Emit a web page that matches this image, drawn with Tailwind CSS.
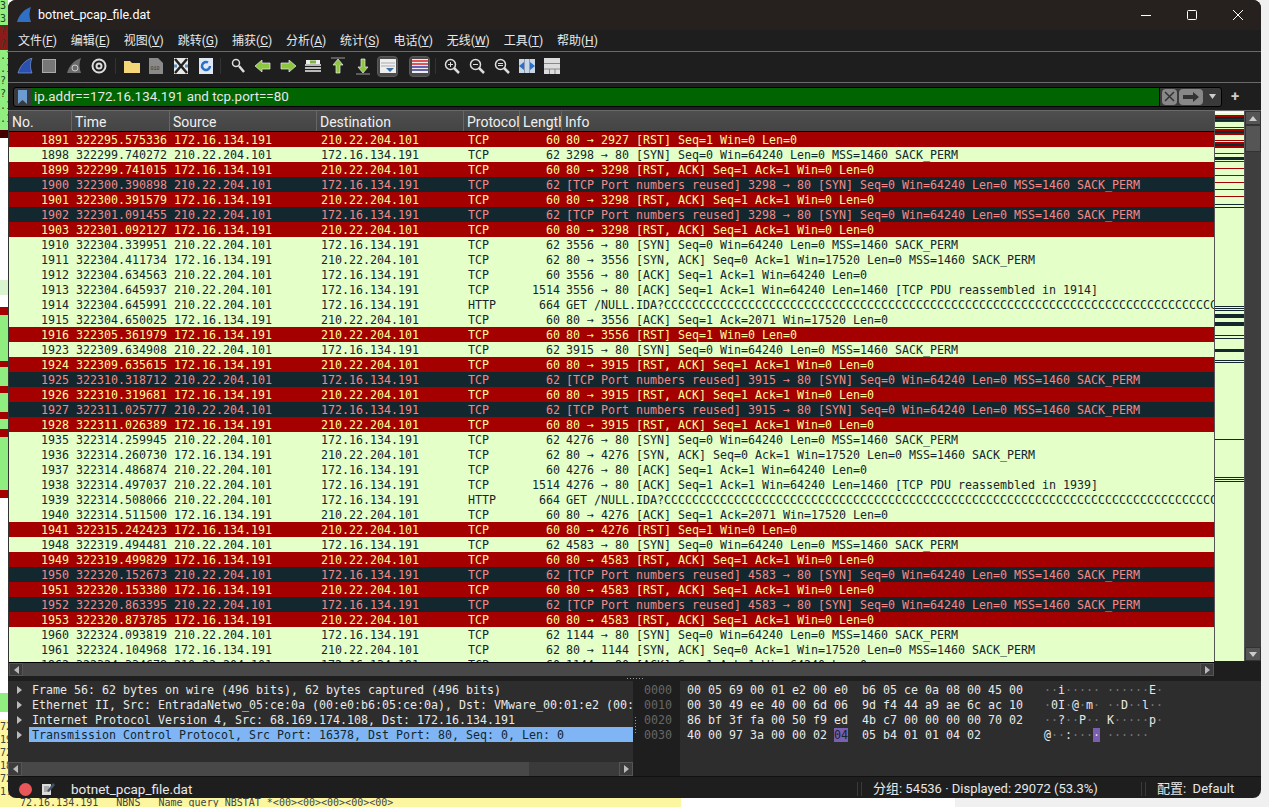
<!DOCTYPE html>
<html lang="zh">
<head>
    <meta charset="UTF-8">
    <title>botnet_pcap_file.dat</title>
    <script src="https://cdn.jsdelivr.net/npm/@tailwindcss/browser@4"></script>
</head>
<body class="relative w-[1269px] h-[807px] overflow-hidden bg-[#f0f0f0] font-['Roboto','Noto_Sans_CJK_SC',sans-serif]">
    <!-- desktop behind the window -->
    <div class="absolute left-0 top-0 w-[955px] h-[807px] bg-white"></div>
    <div class="absolute left-0 top-0 w-[8px] h-[130px] bg-[#90ee80] overflow-hidden font-['DejaVu_Sans_Mono',monospace] text-[10px] leading-[12.5px] text-[#224422]">
        <div>3.</div><div>3.</div><div class="bg-[#8b1a1a]">?.</div><div class="bg-[#8b1a1a]">?.</div><div>.1</div><div>.1</div><div>?.</div><div>?.</div><div>.1</div><div>.1</div>
    </div>
    <div class="absolute left-0 top-[130px] w-[8px] h-[8px] bg-[#400]"></div>
    <div class="absolute left-0 top-[280px] w-[8px] h-[15px] bg-[#d8f5d0]"></div>
    <div class="absolute left-0 top-[307px] w-[8px] h-[191px] bg-[#90ee80] flex flex-col">
        <div class="h-[8px] bg-[#a40000]"></div>
        <div class="h-[48px]"></div>
        <div class="h-[6px] bg-[#a40000]"></div>
        <div class="h-[19px]"></div>
        <div class="h-[8px] bg-[#a40000]"></div>
        <div class="h-[19px]"></div>
        <div class="h-[8px] bg-[#a40000]"></div>
        <div class="h-[10px]"></div>
        <div class="h-[8px] bg-[#a40000]"></div>
        <div class="h-[55px]"></div>
        <div class="h-[8px] bg-[#a40000]"></div>
    </div>
    <div class="absolute left-0 top-[693px] w-[8px] h-[19px] bg-[#90ee80]"></div>
    <div class="absolute left-0 top-[720px] w-[681px] h-[87px] bg-[#fdf6a0] overflow-hidden font-['DejaVu_Sans_Mono',monospace] text-[10px] leading-[13px] text-[#444]">
        <div>72</div><div>19</div><div>72</div><div>18</div><div>72</div><div>1.</div>
        <div class="pl-[20px] leading-[10px] whitespace-nowrap">72.16.134.191 &nbsp;&nbsp;NBNS &nbsp;&nbsp;Name query NBSTAT *&lt;00&gt;&lt;00&gt;&lt;00&gt;&lt;00&gt;&lt;00&gt;</div>
    </div>

    <!-- window -->
    <div class="absolute left-[8px] top-0 w-[1253px] h-[798px] rounded-lg overflow-hidden bg-[#1e1e1e] flex flex-col text-[#e8e8e8]">
        <!-- title bar -->
        <div class="h-[30px] shrink-0 bg-[#26211f] flex items-center pl-[8px]">
            <svg width="16" height="16" viewBox="0 0 16 16"><path d="M1 15 C3 8 8 2 15 0 C13 5 13 10 15 15 Z" fill="#2f6fc4"/></svg>
            <span class="ml-[6px] text-[12.5px] text-white">botnet_pcap_file.dat</span>
            <div class="ml-auto flex items-center">
                <div class="w-[46px] flex justify-center"><svg width="10" height="10" viewBox="0 0 10 10"><path d="M0 5.5H10" stroke="#fff"/></svg></div>
                <div class="w-[46px] flex justify-center"><svg width="10" height="10" viewBox="0 0 10 10"><rect x=".5" y=".5" width="9" height="9" rx="1" fill="none" stroke="#fff"/></svg></div>
                <div class="w-[46px] flex justify-center"><svg width="10" height="10" viewBox="0 0 10 10"><path d="M0 0L10 10M10 0L0 10" stroke="#fff"/></svg></div>
            </div>
        </div>
        <!-- menu -->
        <div class="h-[22px] shrink-0 flex items-center gap-[13.9px] pl-[10px] text-[12px] border-b border-[#6a6a6a]">
            <span>文件(<u>F</u>)</span><span>编辑(<u>E</u>)</span><span>视图(<u>V</u>)</span><span>跳转(<u>G</u>)</span><span>捕获(<u>C</u>)</span><span>分析(<u>A</u>)</span><span>统计(<u>S</u>)</span><span>电话(<u>Y</u>)</span><span>无线(<u>W</u>)</span><span>工具(<u>T</u>)</span><span>帮助(<u>H</u>)</span>
        </div>
        <!-- toolbar -->
        <div class="h-[31px] shrink-0 flex items-center pl-[9px] pb-[2px] border-b border-[#6a6a6a]">
            <div class="w-[16px] h-[16px]"><svg viewBox="0 0 16 16"><path d="M1 15 C3 8 8 2 15 0 C13 5 13 10 15 15 Z" fill="#2a50b0" stroke="#8fa8d8" stroke-width=".6"/></svg></div>
            <div class="ml-[9px] w-[14px] h-[14px] bg-[#777] border border-[#aaa]"></div>
            <div class="ml-[10px] w-[16px] h-[16px]"><svg viewBox="0 0 16 16"><path d="M1 15 C3 8 8 2 15 0 C13 5 13 10 15 15 Z" fill="#6b6b6b"/><circle cx="9" cy="10" r="3" fill="none" stroke="#ccc"/></svg></div>
            <div class="ml-[9px] w-[16px] h-[16px]"><svg viewBox="0 0 16 16"><circle cx="8" cy="8" r="6.5" fill="none" stroke="#ddd" stroke-width="2"/><circle cx="8" cy="8" r="2.5" fill="none" stroke="#ddd" stroke-width="2"/></svg></div>
            <div class="ml-[8px] mr-[8px] w-px h-[16px] bg-[#333]"></div>
            <div class="w-[16px] h-[14px]"><svg viewBox="0 0 16 14"><path d="M0 2H6L8 4H16V14H0Z" fill="#f5d77a"/></svg></div>
            <div class="ml-[9px] w-[14px] h-[16px]"><svg viewBox="0 0 14 16"><path d="M0 0H9L14 5V16H0Z" fill="#8a8a8a"/><text x="1.5" y="12" font-size="5" fill="#333" font-family="Liberation Mono">010</text></svg></div>
            <div class="ml-[11px] w-[14px] h-[16px]"><svg viewBox="0 0 14 16"><rect width="14" height="16" fill="#e8e8e8"/><path d="M1 1L13 15M13 1L1 15" stroke="#222" stroke-width="2.5"/><path d="M0 8H3M11 8H14" stroke="#5f8fb8" stroke-width="3"/></svg></div>
            <div class="ml-[11px] w-[14px] h-[16px]"><svg viewBox="0 0 14 16"><rect width="14" height="16" fill="#dfe8f5"/><path d="M11 8A4 4 0 1 1 9 4.5" fill="none" stroke="#2a70c8" stroke-width="2.5"/></svg></div>
            <div class="ml-[7px] mr-[8px] w-px h-[16px] bg-[#333]"></div>
            <div class="ml-[2px] w-[14px] h-[16px]"><svg viewBox="0 0 14 16"><circle cx="5" cy="5" r="3.5" fill="none" stroke="#ddd" stroke-width="1.5"/><path d="M8 8L13 14" stroke="#ddd" stroke-width="2.5"/></svg></div>
            <div class="ml-[10px] w-[16px] h-[12px]"><svg viewBox="0 0 16 12"><path d="M0 6L7 0V3H15V9H7V12Z" fill="#8dc63f" stroke="#eee" stroke-width=".7"/></svg></div>
            <div class="ml-[9px] w-[16px] h-[12px]"><svg viewBox="0 0 16 12"><path d="M16 6L9 0V3H1V9H9V12Z" fill="#8dc63f" stroke="#eee" stroke-width=".7"/></svg></div>
            <div class="ml-[9px] w-[16px] h-[16px]"><svg viewBox="0 0 16 16"><path d="M0 7H16M0 10H16M0 13H16" stroke="#eee" stroke-width="1.5"/><rect x="1" y="2" width="14" height="4" fill="#eee"/><path d="M5 4H11" stroke="#7cb342" stroke-width="3"/></svg></div>
            <div class="ml-[9px] w-[16px] h-[18px]"><svg viewBox="0 0 16 18"><path d="M1 1H15" stroke="#999"/><path d="M8 2L13 8H10V16H6V8H3Z" fill="#8dc63f" stroke="#eee" stroke-width=".7"/></svg></div>
            <div class="ml-[9px] w-[16px] h-[18px]"><svg viewBox="0 0 16 18"><path d="M1 17H15" stroke="#999"/><path d="M8 16L13 10H10V2H6V10H3Z" fill="#8dc63f" stroke="#eee" stroke-width=".7"/></svg></div>
            <div class="ml-[6px] w-[21px] h-[21px] rounded bg-[#4a4a4a] border border-[#5a5a5a] flex items-center justify-center"><svg width="16" height="14" viewBox="0 0 16 14"><rect width="16" height="14" fill="#eee"/><path d="M1 4H15M1 7H15" stroke="#aaa"/><path d="M6 9H14L10 13Z" fill="#3a6ea5"/></svg></div>
            <div class="ml-[11px] w-[21px] h-[21px] rounded bg-[#4a4a4a] border border-[#5a5a5a] flex items-center justify-center"><svg width="16" height="14" viewBox="0 0 16 14"><rect width="16" height="14" fill="#eee"/><path d="M0 2H16" stroke="#d22" stroke-width="1.5"/><path d="M0 5H16" stroke="#d22" stroke-width="1.5"/><path d="M0 8H16" stroke="#33a" stroke-width="1.5"/><path d="M0 11H16" stroke="#338" stroke-width="1.5"/></svg></div>
            <div class="ml-[5px] mr-[8px] w-px h-[16px] bg-[#333]"></div>
            <div class="w-[16px] h-[16px]"><svg viewBox="0 0 16 16"><circle cx="6.5" cy="6.5" r="5" fill="none" stroke="#ddd" stroke-width="1.5"/><path d="M10 10L15 15" stroke="#ddd" stroke-width="2.5"/><path d="M4 6.5H9M6.5 4V9" stroke="#ddd"/></svg></div>
            <div class="ml-[9px] w-[16px] h-[16px]"><svg viewBox="0 0 16 16"><circle cx="6.5" cy="6.5" r="5" fill="none" stroke="#ddd" stroke-width="1.5"/><path d="M10 10L15 15" stroke="#ddd" stroke-width="2.5"/><path d="M4 6.5H9" stroke="#ddd"/></svg></div>
            <div class="ml-[9px] w-[16px] h-[16px]"><svg viewBox="0 0 16 16"><circle cx="6.5" cy="6.5" r="5" fill="none" stroke="#ddd" stroke-width="1.5"/><path d="M10 10L15 15" stroke="#ddd" stroke-width="2.5"/><path d="M4 5.5H9M4 7.5H9" stroke="#ddd"/></svg></div>
            <div class="ml-[9px] w-[16px] h-[14px]"><svg viewBox="0 0 16 14"><rect width="16" height="14" fill="#c9d6e6"/><path d="M5.5 0V14M10.5 0V14" stroke="#8a9ab0"/><path d="M0 7L5 3V11ZM16 7L11 3V11Z" fill="#2a70c8"/></svg></div>
            <div class="ml-[9px] w-[16px] h-[16px]"><svg viewBox="0 0 16 16"><rect width="16" height="16" fill="#ddd"/><path d="M0 5.5H16M0 11H16M5.5 11V16M11 11V16" stroke="#888"/></svg></div>
        </div>
        <!-- display filter -->
        <div class="h-[28px] shrink-0 flex items-center pl-[5px] border-b border-[#6a6a6a]">
            <div class="w-[1209px] h-[20px] flex items-stretch rounded-[3px] bg-[#3a3a3a] border border-black">
                <div class="w-[17px] flex items-center justify-center"><svg width="9" height="14" viewBox="0 0 9 14"><path d="M0 0H9V14L4.5 10L0 14Z" fill="#6c9bd2"/></svg></div>
                <div class="w-[1129px] bg-[#006400] text-[13.4px] leading-[18px] pl-[3px] text-[#e8e8e8] border-r border-black">ip.addr==172.16.134.191 and tcp.port==80</div>
                <div class="ml-[2px] my-[1px] w-[15px] bg-[#888] rounded-sm flex items-center justify-center"><svg width="11" height="11" viewBox="0 0 11 11"><path d="M1 1L10 10M10 1L1 10" stroke="#333" stroke-width="1.5"/></svg></div>
                <div class="ml-[2px] my-[1px] w-[24px] bg-[#888] rounded-sm flex items-center justify-center"><svg width="16" height="10" viewBox="0 0 16 10"><path d="M0 3H10V0L16 5L10 10V7H0Z" fill="#333"/></svg></div>
                <div class="flex-1 flex items-center justify-center"><svg width="7" height="5" viewBox="0 0 7 5"><path d="M0 0H7L3.5 5Z" fill="#ccc"/></svg></div>
            </div>
            <span class="ml-[9px] text-[15px] font-bold text-[#ccc]">+</span>
        </div>
        <!-- packet list -->
        <div class="h-[565px] shrink-0 flex">
            <div class="w-[1206px] shrink-0 flex flex-col border-l border-[#333]">
                <div class="h-[21px] shrink-0 flex text-[14px] text-[#f0f0f0] bg-gradient-to-b from-[#4e4e4e] to-[#444] border-b border-black leading-[22px]">
                    <div class="w-[63px] pl-[3px] border-r border-[#666]">No.</div>
                    <div class="w-[98px] pl-[3px] border-r border-[#666]">Time</div>
                    <div class="w-[147px] pl-[3px] border-r border-[#666]">Source</div>
                    <div class="w-[147px] pl-[3px] border-r border-[#666]">Destination</div>
                    <div class="w-[56px] pl-[3px] border-r border-[#666] overflow-hidden whitespace-nowrap">Protocol</div>
                    <div class="w-[42px] pl-[3px] border-r border-[#666] overflow-hidden whitespace-nowrap">Length</div>
                    <div class="flex-1 pl-[3px]">Info</div>
                </div>
                <div id="packets" class="h-[530px] overflow-hidden font-['DejaVu_Sans_Mono',monospace] text-[11.63px] bg-[#e4ffc7]"></div>
                <div class="h-[14px] shrink-0 flex bg-[#484848] border-t border-black">
                    <div class="w-[14px] bg-[#3c3c3c] border border-[#555] flex items-center justify-center"><svg width="5" height="8" viewBox="0 0 5 8"><path d="M5 0V8L0 4Z" fill="#bbb"/></svg></div>
                    <div class="flex-1"></div>
                    <div class="w-[14px] bg-[#3c3c3c] border border-[#555] flex items-center justify-center"><svg width="5" height="8" viewBox="0 0 5 8"><path d="M0 0V8L5 4Z" fill="#bbb"/></svg></div>
                </div>
            </div>
            <!-- packet map + scrollbar -->
            <div class="w-[47px] shrink-0 flex h-[550px]">
                <div id="packetMap" class="relative w-[31px] h-[550px] overflow-hidden bg-[#e4ffc7] border-x border-[#555]"></div>
                <div class="w-[16px] flex flex-col bg-[#3e3e3e]">
                    <div class="h-[14px] bg-[#555] border border-[#333] flex items-center justify-center"><svg width="8" height="5" viewBox="0 0 8 5"><path d="M0 5H8L4 0Z" fill="#ccc"/></svg></div>
                    <div class="h-[27px] bg-[#555] border border-[#333]"></div>
                    <div class="flex-1"></div>
                    <div class="h-[14px] bg-[#555] border border-[#333] flex items-center justify-center"><svg width="8" height="5" viewBox="0 0 8 5"><path d="M0 0H8L4 5Z" fill="#ccc"/></svg></div>
                </div>
            </div>
        </div>
        <!-- splitter -->
        <div class="h-[5px] shrink-0 flex items-center justify-center gap-[2px]">
            <i class="w-px h-px bg-[#999]"></i><i class="w-px h-px bg-[#999]"></i><i class="w-px h-px bg-[#999]"></i><i class="w-px h-px bg-[#999]"></i><i class="w-px h-px bg-[#999]"></i><i class="w-px h-px bg-[#999]"></i>
        </div>
        <!-- detail and bytes -->
        <div class="h-[95px] shrink-0 flex font-['DejaVu_Sans_Mono',monospace] text-[11.63px] leading-[15px]">
            <div class="w-[625px] shrink-0 flex flex-col bg-[#2d2d2d]">
                <div class="flex-1 pt-[1px] overflow-hidden whitespace-nowrap leading-[17px]">
                    <div class="flex h-[15px]"><div class="w-[21px] shrink-0 pl-[9px] flex items-center"><svg width="5" height="8" viewBox="0 0 5 8"><path d="M0 0V8L5 4Z" fill="#bbb"/></svg></div><div class="pl-[3px]">Frame 56: 62 bytes on wire (496 bits), 62 bytes captured (496 bits)</div></div>
                    <div class="flex h-[15px]"><div class="w-[21px] shrink-0 pl-[9px] flex items-center"><svg width="5" height="8" viewBox="0 0 5 8"><path d="M0 0V8L5 4Z" fill="#bbb"/></svg></div><div class="pl-[3px]">Ethernet II, Src: EntradaNetwo_05:ce:0a (00:e0:b6:05:ce:0a), Dst: VMware_00:01:e2 (00:</div></div>
                    <div class="flex h-[15px]"><div class="w-[21px] shrink-0 pl-[9px] flex items-center"><svg width="5" height="8" viewBox="0 0 5 8"><path d="M0 0V8L5 4Z" fill="#bbb"/></svg></div><div class="pl-[3px]">Internet Protocol Version 4, Src: 68.169.174.108, Dst: 172.16.134.191</div></div>
                    <div class="flex h-[15px]"><div class="w-[21px] shrink-0 pl-[9px] flex items-center"><svg width="5" height="8" viewBox="0 0 5 8"><path d="M0 0V8L5 4Z" fill="#bbb"/></svg></div><div class="flex-1 pl-[3px] bg-[#7fb5f5] text-[#12272e]">Transmission Control Protocol, Src Port: 16378, Dst Port: 80, Seq: 0, Len: 0</div></div>
                </div>
                <div class="h-[14px] shrink-0 flex bg-[#484848]">
                    <div class="w-[14px] bg-[#3c3c3c] border border-[#555] flex items-center justify-center"><svg width="5" height="8" viewBox="0 0 5 8"><path d="M5 0V8L0 4Z" fill="#bbb"/></svg></div>
                    <div class="flex-1"></div>
                    <div class="w-[90px] bg-[#3a3a3a]"></div>
                    <div class="w-[14px] bg-[#3c3c3c] border border-[#555] flex items-center justify-center"><svg width="5" height="8" viewBox="0 0 5 8"><path d="M0 0V8L5 4Z" fill="#bbb"/></svg></div>
                </div>
            </div>
            <div class="w-[4px] shrink-0 flex flex-col items-center justify-center gap-[2px] pb-[8px]">
                <i class="w-px h-px bg-[#999]"></i><i class="w-px h-px bg-[#999]"></i><i class="w-px h-px bg-[#999]"></i><i class="w-px h-px bg-[#999]"></i><i class="w-px h-px bg-[#999]"></i><i class="w-px h-px bg-[#999]"></i>
            </div>
            <div class="flex-1 flex bg-[#2d2d2d]">
                <div class="w-[43px] shrink-0 bg-[#1e1e1e] pt-[2px] pl-[7px] text-[#666]">
                    <div>0000</div><div>0010</div><div>0020</div><div>0030</div>
                </div>
                <div id="hexDump" class="pt-[2px] pl-[7px] whitespace-pre"></div>
            </div>
        </div>
        <!-- status bar -->
        <div class="flex-1 flex items-center pl-[11px] pt-[2px] text-[13px] border-t border-[#111]">
            <div class="w-[13px] h-[13px] rounded-full bg-[#e8585a]"></div>
            <div class="ml-[9px] w-[14px] h-[14px]"><svg viewBox="0 0 14 14"><path d="M1 2H10V13H1Z" fill="#ddd"/><path d="M3 5H8M3 7H8M3 9H8" stroke="#777"/><path d="M6 9L12 1L14 3L8 10Z" fill="#456"/></svg></div>
            <span class="ml-[16px] w-[786px] text-[13.5px]">botnet_pcap_file.dat</span>
            <div class="w-px h-[14px] bg-[#3a3a3a]"></div>
            <div class="ml-[3px] w-px h-[14px] bg-[#3a3a3a]"></div>
            <span class="ml-[11px] w-[268px] whitespace-nowrap">分组: 54536 · Displayed: 29072 (53.3%)</span>
            <div class="w-px h-[14px] bg-[#3a3a3a]"></div>
            <div class="ml-[3px] w-px h-[14px] bg-[#3a3a3a]"></div>
            <span class="ml-[11px] whitespace-nowrap">配置: &nbsp;Default</span>
        </div>
    </div>

    <script>
        var RED = 'flex h-[15px] leading-[17px] whitespace-nowrap bg-[#a40000] text-[#fffc9c]';
        var DARK = 'flex h-[15px] leading-[17px] whitespace-nowrap bg-[#12272e] text-[#f78787]';
        var LIGHT = 'flex h-[15px] leading-[17px] whitespace-nowrap bg-[#e4ffc7] text-[#12272e]';
        var A = '172.16.134.191', B = '210.22.204.101';
        var CC = 'C'.repeat(79);

        function rst(p) { return ['r', A, B, 60, '80 → ' + p + ' [RST] Seq=1 Win=0 Len=0']; }
        function rstAck(p) { return ['r', A, B, 60, '80 → ' + p + ' [RST, ACK] Seq=1 Ack=1 Win=0 Len=0']; }
        function syn(p) { return ['l', B, A, 62, p + ' → 80 [SYN] Seq=0 Win=64240 Len=0 MSS=1460 SACK_PERM']; }
        function reused(p) { return ['d', B, A, 62, '[TCP Port numbers reused] ' + p + ' → 80 [SYN] Seq=0 Win=64240 Len=0 MSS=1460 SACK_PERM']; }
        function synAck(p) { return ['l', A, B, 62, '80 → ' + p + ' [SYN, ACK] Seq=0 Ack=1 Win=17520 Len=0 MSS=1460 SACK_PERM']; }
        function ack(p) { return ['l', B, A, 60, p + ' → 80 [ACK] Seq=1 Ack=1 Win=64240 Len=0']; }
        function pdu(p, n) { return ['l', B, A, 1514, p + ' → 80 [ACK] Seq=1 Ack=1 Win=64240 Len=1460 [TCP PDU reassembled in ' + n + ']']; }
        function get() { return ['l', B, A, 664, 'GET /NULL.IDA?' + CC, 'HTTP']; }
        function ack2(p) { return ['l', A, B, 60, '80 → ' + p + ' [ACK] Seq=1 Ack=2071 Win=17520 Len=0']; }

        var packets = [
            [1891, '322295.575336', rst(2927)], [1898, '322299.740272', syn(3298)], [1899, '322299.741015', rstAck(3298)],
            [1900, '322300.390898', reused(3298)], [1901, '322300.391579', rstAck(3298)], [1902, '322301.091455', reused(3298)],
            [1903, '322301.092127', rstAck(3298)], [1910, '322304.339951', syn(3556)], [1911, '322304.411734', synAck(3556)],
            [1912, '322304.634563', ack(3556)], [1913, '322304.645937', pdu(3556, 1914)], [1914, '322304.645991', get()],
            [1915, '322304.650025', ack2(3556)], [1916, '322305.361979', rst(3556)], [1923, '322309.634908', syn(3915)],
            [1924, '322309.635615', rstAck(3915)], [1925, '322310.318712', reused(3915)], [1926, '322310.319681', rstAck(3915)],
            [1927, '322311.025777', reused(3915)], [1928, '322311.026389', rstAck(3915)], [1935, '322314.259945', syn(4276)],
            [1936, '322314.260730', synAck(4276)], [1937, '322314.486874', ack(4276)], [1938, '322314.497037', pdu(4276, 1939)],
            [1939, '322314.508066', get()], [1940, '322314.511500', ack2(4276)], [1941, '322315.242423', rst(4276)],
            [1948, '322319.494481', syn(4583)], [1949, '322319.499829', rstAck(4583)], [1950, '322320.152673', reused(4583)],
            [1951, '322320.153380', rstAck(4583)], [1952, '322320.863395', reused(4583)], [1953, '322320.873785', rstAck(4583)],
            [1960, '322324.093819', syn(1144)], [1961, '322324.104968', synAck(1144)], [1962, '322324.334678', ack(1144)]
        ];

        document.getElementById('packets').innerHTML = packets.map(function (p) {
            var d = p[2];
            var cls = d[0] === 'r' ? RED : d[0] === 'd' ? DARK : LIGHT;
            return '<div class="' + cls + '">' +
                '<div class="w-[60px] shrink-0 text-right">' + p[0] + '</div>' +
                '<div class="w-[101px] shrink-0 pl-[7px]">' + p[1] + '</div>' +
                '<div class="w-[147px] shrink-0 pl-[4px]">' + d[1] + '</div>' +
                '<div class="w-[147px] shrink-0 pl-[4px]">' + d[2] + '</div>' +
                '<div class="w-[57px] shrink-0 pl-[4px]">' + (d[5] || 'TCP') + '</div>' +
                '<div class="w-[39px] shrink-0 text-right">' + d[3] + '</div>' +
                '<div class="shrink-0 pl-[6px]">' + d[4] + '</div></div>';
        }).join('');

        // packet map stripes: [top, height, colour]
        var R = 'bg-[#a40000]', D = 'bg-[#12272e]';
        var stripes = [
            [1, 1, 'bg-white'], [4, 2, R], [6, 2, D], [8, 1, R], [9, 1, D], [10, 1, R], [16, 1, R],
            [18, 2, R], [20, 2, D], [22, 2, R], [29, 1, R], [31, 2, R], [33, 2, D], [35, 2, R],
            [42, 1, R], [46, 3, D], [50, 1, R], [57, 1, R], [64, 1, R], [71, 1, R], [78, 1, R], [85, 1, R],
            [93, 1, D], [96, 1, D], [195, 1, D], [197, 1, D], [199, 1, D], [203, 4, D], [211, 4, D],
            [224, 1, D], [227, 1, D], [238, 3, D], [249, 1, D], [251, 1, D], [328, 1, D], [366, 1, D], [368, 1, D], [370, 1, D]
        ];
        document.getElementById('packetMap').innerHTML = stripes.map(function (s) {
            return '<div class="absolute left-0 right-0 ' + s[2] + '" style="top:' + s[0] + 'px;height:' + s[1] + 'px"></div>';
        }).join('');

        // hex dump, byte 0x37 highlighted
        var dim = function (t) { return t.replace(/·/g, '<span class="text-[#777]">·</span>'); };
        document.getElementById('hexDump').innerHTML =
            '<div>00 05 69 00 01 e2 00 e0  b6 05 ce 0a 08 00 45 00   ' + dim('··i····· ······E·') + '</div>' +
            '<div>00 30 49 ee 40 00 6d 06  9d f4 44 a9 ae 6c ac 10   ' + dim('·0I·@·m· ··D··l··') + '</div>' +
            '<div>86 bf 3f fa 00 50 f9 ed  4b c7 00 00 00 00 70 02   ' + dim('··?··P·· K·····p·') + '</div>' +
            '<div>40 00 97 3a 00 00 02 <span class="bg-[#7a5fb0] text-[#12272e]">04</span>  05 b4 01 01 04 02         ' + dim('@··:···') + '<span class="bg-[#7a5fb0] text-[#ddd]">·</span> ' + dim('······') + '</div>';
    </script>
</body>
</html>
